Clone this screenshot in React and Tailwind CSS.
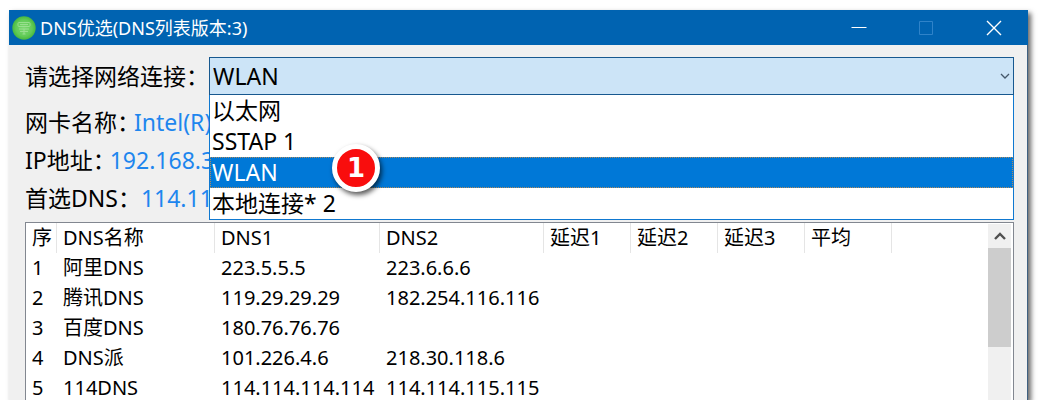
import React, { useState } from 'react';

const adapters = ['以太网', 'SSTAP 1', 'WLAN', '本地连接* 2'];

const details = [
  { label: '网卡名称：', value: 'Intel(R)' },
  { label: 'IP地址：', value: '192.168.3' },
  { label: '首选DNS： ', value: '114.11' },
];

const columns = [
  { title: '序', width: 'w-[31px]' },
  { title: 'DNS名称', width: 'w-[158px]' },
  { title: 'DNS1', width: 'w-[165px]' },
  { title: 'DNS2', width: 'w-[164px]' },
  { title: '延迟1', width: 'w-[87px]' },
  { title: '延迟2', width: 'w-[87px]' },
  { title: '延迟3', width: 'w-[87px]' },
  { title: '平均', width: 'w-[87px]' },
];

const servers = [
  ['1', '阿里DNS', '223.5.5.5', '223.6.6.6'],
  ['2', '腾讯DNS', '119.29.29.29', '182.254.116.116'],
  ['3', '百度DNS', '180.76.76.76', ''],
  ['4', 'DNS派', '101.226.4.6', '218.30.118.6'],
  ['5', '114DNS', '114.114.114.114', '114.114.115.115'],
];

function TitleBar() {
  return (
    <header className="flex h-[35px] shrink-0 items-center bg-[#0063b1] pl-[3px] text-white">
      <svg className="h-6 w-6" viewBox="0 0 24 24" aria-hidden="true">
        <defs>
          <radialGradient id="ball">
            <stop offset="0" stopColor="#7ed873" />
            <stop offset="0.7" stopColor="#62cb57" />
            <stop offset="1" stopColor="#47b83e" />
          </radialGradient>
        </defs>
        <circle cx="12" cy="12" r="11.7" fill="url(#ball)" />
        <g fill="none" stroke="#a3e39a" strokeWidth="1" opacity="0.8">
          <rect x="6" y="6.500" width="12" height="4" rx="1" />
          <path d="M7 13h10M8 15.500h8M10.500 18h3M12 13v5M8 8.500h8" />
        </g>
      </svg>
      <h1 className="ml-1 flex-1 truncate text-[18px] leading-6">DNS优选(DNS列表版本:3)</h1>
      <button type="button" aria-label="最小化" className="flex h-full w-[67px] items-center justify-center">
        <svg className="h-4 w-4" viewBox="0 0 16 16" stroke="currentColor" fill="none">
          <path d="M0.500 7.500h15" />
        </svg>
      </button>
      <button type="button" aria-label="最大化" disabled className="flex h-full w-[67px] items-center justify-center text-[#2f83c9]">
        <svg className="h-4 w-4" viewBox="0 0 16 16" stroke="currentColor" fill="none">
          <path d="M1.500 1.500h13v13h-13z" />
        </svg>
      </button>
      <button type="button" aria-label="关闭" className="flex h-full w-[69px] items-center justify-center">
        <svg className="h-4 w-4" viewBox="0 0 16 16" stroke="currentColor" strokeWidth="1.400" fill="none">
          <path d="M1 1l14 14M15 1L1 15" />
        </svg>
      </button>
    </header>
  );
}

function AdapterPicker() {
  const [adapter, setAdapter] = useState('WLAN');
  return (
    <div className="flex items-center text-[23px]">
      <label htmlFor="adapter" className="shrink-0 whitespace-nowrap">请选择网络连接：</label>
      <div className="relative min-w-0 flex-1">
        <select
          id="adapter"
          value={adapter}
          onChange={(e) => setAdapter(e.target.value)}
          className="block h-[38px] w-full appearance-none border border-[#17588f] bg-[#cce4f7] px-[3px] leading-8 text-black outline-none"
        >
          {adapters.map((name) => (
            <option key={name}>{name}</option>
          ))}
        </select>
        <svg className="pointer-events-none absolute top-3.5 right-1 h-2.5 w-2.5" viewBox="0 0 10 10" fill="none" stroke="#44576a" strokeWidth="1.300" aria-hidden="true">
          <path d="M1 3l4 4 4-4" />
        </svg>
        <ul role="listbox" aria-label="网络连接" className="absolute top-full right-0 left-0 z-10 border border-t-0 border-[#0f78d0] bg-white">
          {adapters.map((name) => (
            <li
              key={name}
              role="option"
              aria-selected={name === adapter}
              onClick={() => setAdapter(name)}
              className={
                name === adapter
                  ? 'h-[31px] border border-dotted border-[#b08a5c] bg-[#0078d7] px-px leading-[29px] text-white'
                  : 'h-[31px] px-0.5 leading-[31px]'
              }
            >
              {name}
            </li>
          ))}
        </ul>
        <span className="absolute top-[87px] left-[123px] z-20 flex h-12 w-12 items-center justify-center rounded-full border-5 border-white bg-[#f90d0d] font-['DejaVu_Sans'] text-[26px] leading-none font-bold text-white shadow-[2px_3px_5px_rgba(0,0,0,0.65)]">
          1
        </span>
      </div>
    </div>
  );
}

function ServerTable() {
  return (
    <div className="mt-[5px] flex min-h-0 flex-1 border border-b-0 border-[#828790] bg-white pr-0.5">
      <div className="min-w-0 flex-1 overflow-hidden">
        <table className="w-full table-fixed border-separate border-spacing-0 text-left text-[20px]">
          <thead>
            <tr>
              {columns.map((c) => (
                <th key={c.title} scope="col" className={`${c.width} h-[30px] border-r border-[#e5e5e5] p-0 pl-1.5 leading-[30px] font-normal whitespace-nowrap`}>
                  {c.title}
                </th>
              ))}
              <td />
            </tr>
          </thead>
          <tbody>
            {servers.map((row) => (
              <tr key={row[0]}>
                {row.map((cell, i) => (
                  <td key={i} className="h-[30px] p-0 pl-1.5 leading-[30px] whitespace-nowrap">{cell}</td>
                ))}
                <td colSpan={5} />
              </tr>
            ))}
          </tbody>
        </table>
      </div>
      <div className="mt-px flex w-[23px] shrink-0 flex-col bg-[#f0f0f0]">
        <button type="button" aria-label="向上滚动" className="flex h-6 w-full items-center justify-center">
          <svg className="h-3 w-3" viewBox="0 0 12 12" fill="none" stroke="#505050" strokeWidth="2.400">
            <path d="M1 9l5-5 5 5" />
          </svg>
        </button>
        <div className="h-[99px] bg-[#cdcdcd]" />
      </div>
    </div>
  );
}

export default function App() {
  return (
    <div className="flex h-screen overflow-hidden bg-white pt-2.5 pr-[11px] pl-[9px] font-['Noto_Sans','Noto_Sans_CJK_SC',sans-serif] text-black">
      <div className="flex min-w-0 flex-1 flex-col bg-[#f0f0f0] shadow-[3px_3px_5px_rgba(0,0,0,0.6)]">
        <TitleBar />
        <main className="flex min-h-0 flex-1 flex-col border-r border-[#3f6080] pt-3 pr-[13px] pl-4">
          <AdapterPicker />
          <dl className="mt-2 text-[23px] leading-[38px]">
            {details.map((d) => (
              <div key={d.label} className="flex h-[38px]">
                <dt className="-mr-1.5 whitespace-pre">{d.label}</dt>
                <dd className="whitespace-nowrap text-[#1e86ee]">{d.value}</dd>
              </div>
            ))}
          </dl>
          <ServerTable />
        </main>
      </div>
    </div>
  );
}
